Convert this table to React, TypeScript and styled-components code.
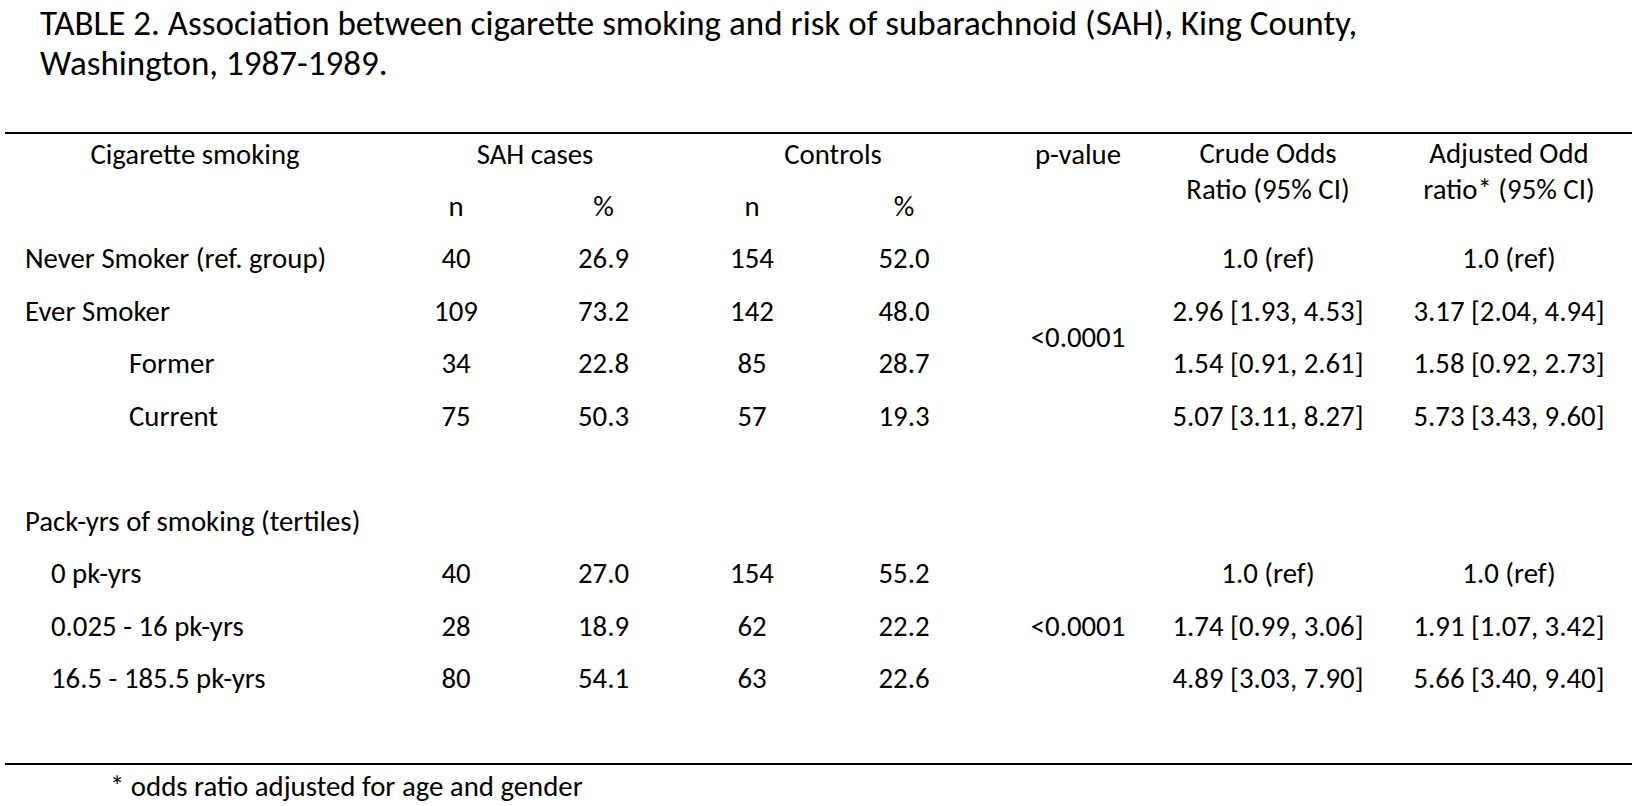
import React from 'react'
import styled, { createGlobalStyle } from 'styled-components'

const GlobalStyle = createGlobalStyle`
  body {
    margin: 0;
    background: #fff;
    color: #000;
    font-family: Carlito, Calibri, "Liberation Sans", sans-serif;
  }
`

const Page = styled.div`
  width: 1640px;
  height: 806px;
  overflow: hidden;
`
const Title = styled.div`
  margin: 2.5px 0 0 40px;
  font-size: 35px;
  line-height: 40px;
`
const Table = styled.div`
  margin: 49.5px 8px 0 5px;
  padding-bottom: 58px;
  border-top: 2px solid #000;
  border-bottom: 2px solid #000;
  display: grid;
  grid-template-columns: 377px 148px 147px 150px 154px 194px 186px 1fr;
  grid-template-rows: 40px 58.5px repeat(9, 52.5px);
  font-size: 28.8px;
  line-height: 35px;
`
const Cell = styled.div<{
  $row: number
  $col: number
  $rowSpan?: number
  $colSpan?: number
  $left?: boolean
  $indent?: number
}>`
  grid-row: ${p => p.$row} / span ${p => p.$rowSpan ?? 1};
  grid-column: ${p => p.$col} / span ${p => p.$colSpan ?? 1};
  display: flex;
  align-items: center;
  justify-content: ${p => (p.$left ? 'flex-start' : 'center')};
  padding-left: ${p => p.$indent ?? 0}px;
  white-space: nowrap;
`
const HeadCell = styled(Cell)<{ $shift?: number }>`
  padding-left: ${p => Math.max(p.$shift ?? 0, 0) * 2}px;
  padding-right: ${p => Math.max(-(p.$shift ?? 0), 0) * 2}px;
`
const SubHeadCell = styled(Cell)`
  padding-top: 6.5px;
`
const TwoLineHead = styled.div<{ $row: number; $col: number; $shift?: number }>`
  grid-row: ${p => p.$row} / span 2;
  grid-column: ${p => p.$col};
  padding: 2px 0 0 ${p => (p.$shift ?? 0) * 2}px;
  text-align: center;
  line-height: 36px;
  white-space: nowrap;
`
const Footnote = styled.div`
  margin: 4px 0 0 110px;
  font-size: 28.8px;
  line-height: 35px;
`

type DataRow = {
  label: string
  indent: number
  values: [string, string, string, string]
  crude: string
  adjusted: string
}

const smokingRows: DataRow[] = [
  { label: 'Never Smoker (ref. group)', indent: 20, values: ['40', '26.9', '154', '52.0'], crude: '1.0 (ref)', adjusted: '1.0 (ref)' },
  { label: 'Ever Smoker', indent: 20, values: ['109', '73.2', '142', '48.0'], crude: '2.96 [1.93, 4.53]', adjusted: '3.17 [2.04, 4.94]' },
  { label: 'Former', indent: 124, values: ['34', '22.8', '85', '28.7'], crude: '1.54 [0.91, 2.61]', adjusted: '1.58 [0.92, 2.73]' },
  { label: 'Current', indent: 124, values: ['75', '50.3', '57', '19.3'], crude: '5.07 [3.11, 8.27]', adjusted: '5.73 [3.43, 9.60]' }
]

const packRows: DataRow[] = [
  { label: '0 pk-yrs', indent: 46, values: ['40', '27.0', '154', '55.2'], crude: '1.0 (ref)', adjusted: '1.0 (ref)' },
  { label: '0.025 - 16 pk-yrs', indent: 46, values: ['28', '18.9', '62', '22.2'], crude: '1.74 [0.99, 3.06]', adjusted: '1.91 [1.07, 3.42]' },
  { label: '16.5 - 185.5 pk-yrs', indent: 46, values: ['80', '54.1', '63', '22.6'], crude: '4.89 [3.03, 7.90]', adjusted: '5.66 [3.40, 9.40]' }
]

const renderRow = (r: DataRow, row: number) => (
  <React.Fragment key={r.label}>
    <Cell $row={row} $col={1} $left $indent={r.indent}>{r.label}</Cell>
    {r.values.map((v, i) => (
      <Cell key={i} $row={row} $col={i + 2}>{v}</Cell>
    ))}
    <Cell $row={row} $col={7}>{r.crude}</Cell>
    <Cell $row={row} $col={8} $indent={25}>{r.adjusted}</Cell>
  </React.Fragment>
)

export default function App() {
  return (
    <Page>
      <GlobalStyle />
      <Title>
        TABLE 2. Association between cigarette smoking and risk of subarachnoid (SAH), King County,
        <br />
        Washington, 1987-1989.
      </Title>
      <Table>
        <HeadCell $row={1} $col={1} $shift={1.5}>Cigarette smoking</HeadCell>
        <HeadCell $row={1} $col={2} $colSpan={2} $shift={5.5}>SAH cases</HeadCell>
        <HeadCell $row={1} $col={4} $colSpan={2} $shift={4}>Controls</HeadCell>
        <HeadCell $row={1} $col={6}>p-value</HeadCell>
        <TwoLineHead $row={1} $col={7}>
          Crude Odds
          <br />
          Ratio (95% CI)
        </TwoLineHead>
        <TwoLineHead $row={1} $col={8} $shift={12.5}>
          Adjusted Odd
          <br />
          ratio* (95% CI)
        </TwoLineHead>
        {['n', '%', 'n', '%'].map((h, i) => (
          <SubHeadCell key={i} $row={2} $col={i + 2}>{h}</SubHeadCell>
        ))}

        {smokingRows.map((r, i) => renderRow(r, i + 3))}
        <Cell $row={3} $col={6} $rowSpan={4}>&lt;0.0001</Cell>

        <Cell $row={8} $col={1} $left $indent={20}>Pack-yrs of smoking (tertiles)</Cell>
        {packRows.map((r, i) => renderRow(r, i + 9))}
        <Cell $row={9} $col={6} $rowSpan={3}>&lt;0.0001</Cell>
      </Table>
      <Footnote>* odds ratio adjusted for age and gender</Footnote>
    </Page>
  )
}
